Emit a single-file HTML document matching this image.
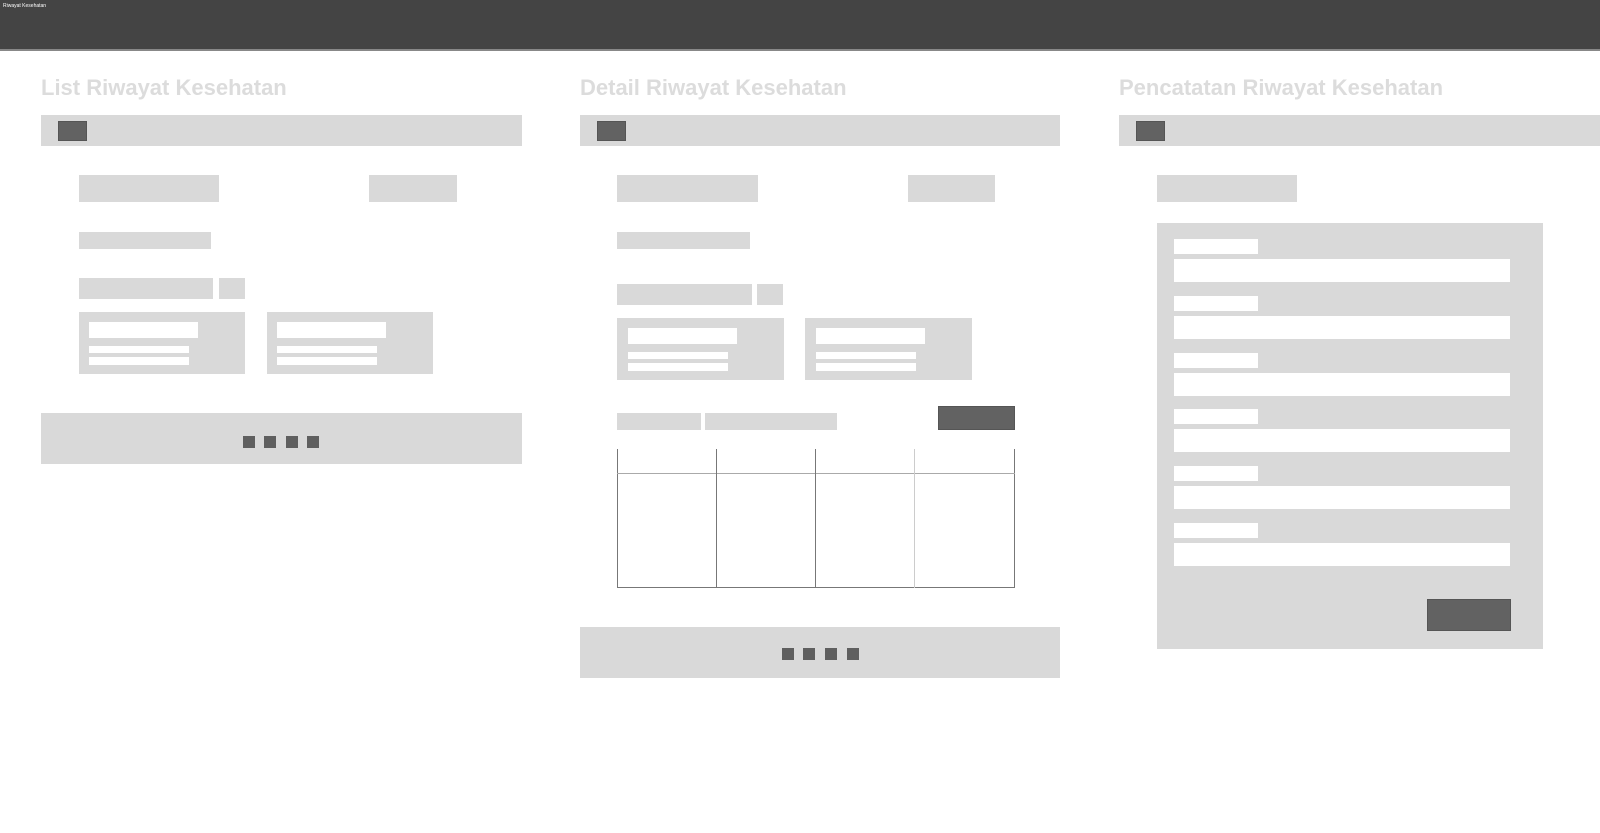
<!DOCTYPE html>
<html><head><meta charset="utf-8"><style>
body{margin:0;width:1600px;height:833px;position:relative;background:#fff;overflow:hidden;font-family:"Liberation Sans",sans-serif}
div{position:absolute;box-sizing:border-box}
.g{background:#d9d9d9}
.w{background:#fff}
.d{background:#626262;border:1px solid #555}
.t{font-weight:bold;font-size:22px;color:#dcdcdc;top:75px;white-space:nowrap}
.sq{background:#5f5f5f;width:12px;height:12px}
</style></head><body>
<div style="left:0;top:0;width:1600px;height:51px;background:#444;border-bottom:2px solid #888"></div>
<div style="left:3px;top:3px;font-size:5px;color:#fff">Riwayat Kesehatan</div>

<div class="t" style="left:41px">List Riwayat Kesehatan</div>
<div class="t" style="left:580px">Detail Riwayat Kesehatan</div>
<div class="t" style="left:1119px">Pencatatan Riwayat Kesehatan</div>

<!-- toolbars -->
<div class="g" style="left:41px;top:115px;width:481px;height:31px"></div>
<div class="d" style="left:58px;top:121px;width:29px;height:20px"></div>
<div class="g" style="left:580px;top:115px;width:480px;height:31px"></div>
<div class="d" style="left:597px;top:121px;width:29px;height:20px"></div>
<div class="g" style="left:1119px;top:115px;width:481px;height:31px"></div>
<div class="d" style="left:1136px;top:121px;width:29px;height:20px"></div>

<!-- panel 1 -->
<div class="g" style="left:79px;top:175px;width:140px;height:27px"></div>
<div class="g" style="left:369px;top:175px;width:88px;height:27px"></div>
<div class="g" style="left:79px;top:232px;width:132px;height:17px"></div>
<div class="g" style="left:79px;top:278px;width:134px;height:21px"></div>
<div class="g" style="left:219px;top:278px;width:26px;height:21px"></div>
<div class="g" style="left:79px;top:312px;width:166px;height:62px"></div>
<div class="w" style="left:89px;top:322px;width:109px;height:16px"></div>
<div class="w" style="left:89px;top:346px;width:100px;height:7px"></div>
<div class="w" style="left:89px;top:357px;width:100px;height:8px"></div>
<div class="g" style="left:267px;top:312px;width:166px;height:62px"></div>
<div class="w" style="left:277px;top:322px;width:109px;height:16px"></div>
<div class="w" style="left:277px;top:346px;width:100px;height:7px"></div>
<div class="w" style="left:277px;top:357px;width:100px;height:8px"></div>
<div class="g" style="left:41px;top:413px;width:481px;height:51px"></div>
<div class="sq" style="left:243px;top:436px"></div>
<div class="sq" style="left:264px;top:436px"></div>
<div class="sq" style="left:286px;top:436px"></div>
<div class="sq" style="left:307px;top:436px"></div>

<!-- panel 2 -->
<div class="g" style="left:617px;top:175px;width:141px;height:27px"></div>
<div class="g" style="left:908px;top:175px;width:87px;height:27px"></div>
<div class="g" style="left:617px;top:232px;width:133px;height:17px"></div>
<div class="g" style="left:617px;top:284px;width:135px;height:21px"></div>
<div class="g" style="left:757px;top:284px;width:26px;height:21px"></div>
<div class="g" style="left:617px;top:318px;width:167px;height:62px"></div>
<div class="w" style="left:628px;top:328px;width:109px;height:16px"></div>
<div class="w" style="left:628px;top:352px;width:100px;height:7px"></div>
<div class="w" style="left:628px;top:363px;width:100px;height:8px"></div>
<div class="g" style="left:805px;top:318px;width:167px;height:62px"></div>
<div class="w" style="left:816px;top:328px;width:109px;height:16px"></div>
<div class="w" style="left:816px;top:352px;width:100px;height:7px"></div>
<div class="w" style="left:816px;top:363px;width:100px;height:8px"></div>
<div class="g" style="left:617px;top:413px;width:84px;height:17px"></div>
<div class="g" style="left:705px;top:413px;width:132px;height:17px"></div>
<div class="d" style="left:938px;top:406px;width:77px;height:24px"></div>
<div style="left:617px;top:449px;width:398px;height:139px;border-left:1px solid #777;border-right:1px solid #777;border-bottom:1px solid #777"></div>
<div style="left:617px;top:473px;width:398px;height:1px;background:#aaa"></div>
<div style="left:716px;top:449px;width:1px;height:139px;background:#777"></div>
<div style="left:815px;top:449px;width:1px;height:139px;background:#777"></div>
<div style="left:914px;top:449px;width:1px;height:139px;background:#ccc"></div>
<div class="g" style="left:580px;top:627px;width:480px;height:51px"></div>
<div class="sq" style="left:782px;top:648px"></div>
<div class="sq" style="left:803px;top:648px"></div>
<div class="sq" style="left:825px;top:648px"></div>
<div class="sq" style="left:847px;top:648px"></div>

<!-- panel 3 -->
<div class="g" style="left:1157px;top:175px;width:140px;height:27px"></div>
<div class="g" style="left:1157px;top:223px;width:386px;height:426px"></div>
<div class="w" style="left:1174px;top:239px;width:84px;height:15px"></div>
<div class="w" style="left:1174px;top:259px;width:336px;height:23px"></div>
<div class="w" style="left:1174px;top:296px;width:84px;height:15px"></div>
<div class="w" style="left:1174px;top:316px;width:336px;height:23px"></div>
<div class="w" style="left:1174px;top:353px;width:84px;height:15px"></div>
<div class="w" style="left:1174px;top:373px;width:336px;height:23px"></div>
<div class="w" style="left:1174px;top:409px;width:84px;height:15px"></div>
<div class="w" style="left:1174px;top:429px;width:336px;height:23px"></div>
<div class="w" style="left:1174px;top:466px;width:84px;height:15px"></div>
<div class="w" style="left:1174px;top:486px;width:336px;height:23px"></div>
<div class="w" style="left:1174px;top:523px;width:84px;height:15px"></div>
<div class="w" style="left:1174px;top:543px;width:336px;height:23px"></div>
<div class="d" style="left:1427px;top:599px;width:84px;height:32px"></div>
</body></html>
